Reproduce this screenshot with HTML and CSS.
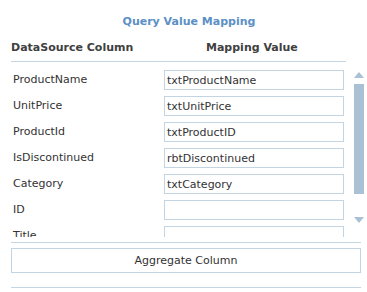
FILE: index.html
```html
<!DOCTYPE html>
<html>
<head>
    <meta charset="UTF-8">
    <title>Query Value Mapping</title>
    <link rel="stylesheet" href="styles.css">
</head>
<body>
    <div class="panel">
        <h3 class="title">Query Value Mapping</h3>
        <div class="head">
            <span class="col-src">DataSource Column</span>
            <span class="col-map">Mapping Value</span>
        </div>
        <div class="mapping">
            <div class="rows">
                <div class="row"><label>ProductName</label><input type="text" value="txtProductName"></div>
                <div class="row"><label>UnitPrice</label><input type="text" value="txtUnitPrice"></div>
                <div class="row"><label>ProductId</label><input type="text" value="txtProductID"></div>
                <div class="row"><label>IsDiscontinued</label><input type="text" value="rbtDiscontinued"></div>
                <div class="row"><label>Category</label><input type="text" value="txtCategory"></div>
                <div class="row"><label>ID</label><input type="text" value=""></div>
                <div class="row"><label>Title</label><input type="text" value=""></div>
            </div>
            <div class="scrollbar">
                <span class="arrow up"></span>
                <span class="thumb"></span>
                <span class="arrow down"></span>
            </div>
        </div>
        <div class="actions">
            <button type="button">Aggregate Column</button>
        </div>
    </div>
</body>
</html>
```

FILE: styles.css
```css
body {
    margin: 0;
    background: #ffffff;
    font-family: 'DejaVu Sans', Verdana, sans-serif;
    font-size: 11px;
    color: #333333;
}

.panel {
    padding-left: 11px;
    width: 356px;
}

.title {
    margin: 0 0 0 -11px;
    padding: 14px 0 0 11px;
    width: 356px;
    height: 16px;
    line-height: 16px;
    font-size: 11px;
    font-weight: bold;
    color: #5b90c6;
    text-align: center;
}

.head {
    display: flex;
    width: 335px;
    padding: 10px 0 5px;
    line-height: 16px;
    font-weight: bold;
    color: #404040;
    border-bottom: 1px solid #c5d6e2;
}

.col-src {
    width: 195px;
}

.mapping {
    display: flex;
    height: 175px;
}

.rows {
    width: 343px;
    padding-top: 5px;
    overflow: hidden;
}

.row {
    display: flex;
    height: 26px;
    padding-top: 3px;
    box-sizing: border-box;
}

.row label {
    width: 151px;
    padding-left: 2px;
    margin-top: 2px;
    line-height: 16px;
    color: #333333;
}

.row input {
    width: 180px;
    height: 20px;
    box-sizing: border-box;
    margin: 0;
    padding: 0 2px;
    border: 1px solid #c3d5e3;
    font-family: inherit;
    font-size: 11px;
    color: #333333;
    outline: none;
}

.scrollbar {
    display: flex;
    flex-direction: column;
    align-items: center;
    width: 10px;
}

.arrow {
    width: 0;
    height: 0;
    border-left: 5px solid transparent;
    border-right: 5px solid transparent;
}

.arrow.up {
    margin-top: 10px;
    border-bottom: 6px solid #a9c0d5;
}

.arrow.down {
    margin-top: auto;
    margin-bottom: 14px;
    border-top: 6px solid #a9c0d5;
}

.thumb {
    width: 10px;
    height: 110px;
    margin-top: 6px;
    background: #a9c0d5;
}

.actions {
    width: 350px;
    margin-top: 5px;
    padding: 5px 0 14px;
    border-top: 1px solid #c5d6e2;
    border-bottom: 1px solid #c5d6e2;
}

.actions button {
    width: 350px;
    height: 25px;
    margin: 0;
    padding: 0;
    background: #ffffff;
    border: 1px solid #c3d5e3;
    font-family: inherit;
    font-size: 11px;
    color: #333333;
}
```
